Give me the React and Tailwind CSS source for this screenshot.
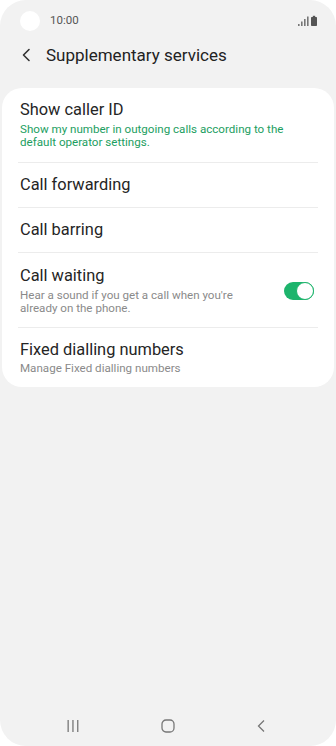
import React from "react";

function Row({ title, sub, subGreen, toggle, className = "", subClass = "mt-[2px]" }) {
  return (
    <div className={"flex items-center px-[18px] " + className}>
      <div className="flex-1">
        <div className="text-[16.4px] leading-[20px] text-[#252525]">{title}</div>
        {sub && (
          <div
            className={
              subClass +
              " text-[11.6px] leading-[13px] " +
              (subGreen ? "text-[#1c9e5f]" : "text-[#8a8a8a]")
            }
          >
            {sub}
          </div>
        )}
      </div>
      {toggle && (
        <div className="relative ml-3 mr-[2px] h-[18px] w-[30px] rounded-full bg-[#1db46c]">
          <div className="absolute right-0 top-0 h-[18px] w-[18px] rounded-full border-[1.5px] border-[#1db46c] bg-white" />
        </div>
      )}
    </div>
  );
}

function Divider() {
  return <div className="mx-4 h-px bg-[#ececec]" />;
}

export default function App() {
  return (
    <div className="h-[746px] w-[336px] bg-white" style={{ fontFamily: "Roboto, 'Noto Sans', sans-serif" }}>
      <div className="flex h-full w-full flex-col overflow-hidden rounded-[26px] bg-[#f2f2f2]">
        {/* status bar */}
        <div className="flex h-[40px] items-center pl-5 pr-[18px] pt-[1px]">
          <div className="h-[20px] w-[20px] rounded-full bg-white" />
          <div className="ml-[10px] mt-[1px] text-[11.5px] text-[#555]">10:00</div>
          <div className="flex-1" />
          <svg width="20" height="12" viewBox="0 0 20 12">
            <rect x="0" y="9" width="1.6" height="2" fill="#777" />
            <rect x="3" y="6.5" width="1.6" height="4.5" fill="#777" />
            <rect x="6" y="4" width="1.6" height="7" fill="#777" />
            <rect x="9" y="1.5" width="1.6" height="9.5" fill="#777" />
            <rect x="13" y="2" width="6" height="9" rx="0.8" fill="#555" />
            <rect x="14.8" y="0.8" width="2.4" height="1.5" fill="#555" />
          </svg>
        </div>
        {/* header */}
        <div className="flex h-[30px] items-center pl-[21px]">
          <svg width="10" height="14" viewBox="0 0 10 14" fill="none">
            <path d="M8 1.5 L2.5 7 L8 12.5" stroke="#333" strokeWidth="1.6" strokeLinecap="round" strokeLinejoin="round" />
          </svg>
          <div className="ml-[15px] text-[17px] leading-[24px] text-[#222]">Supplementary services</div>
        </div>
        {/* card */}
        <div className="mx-[2px] mt-[18px] rounded-[20px] bg-white">
          <Row
            className="pt-[12px] pb-[13px]"
            subClass="mt-[3px]"
            title="Show caller ID"
            sub={<>Show my number in outgoing calls according to the<br />default operator settings.</>}
            subGreen
          />
          <Divider />
          <Row className="h-[44px]" title="Call forwarding" />
          <Divider />
          <Row className="h-[44px]" title="Call barring" />
          <Divider />
          <Row
            className="pt-[13px] pb-[12px]"
            subClass="mt-[3px]"
            title="Call waiting"
            sub={<>Hear a sound if you get a call when you're<br />already on the phone.</>}
            toggle
          />
          <Divider />
          <Row
            className="pt-[12px] pb-[12px]"
            title="Fixed dialling numbers"
            sub="Manage Fixed dialling numbers"
          />
        </div>
        <div className="flex-1" />
        {/* nav bar */}
        <div className="flex h-[40px] items-center justify-between pl-[66px] pr-[67px]">
          <svg width="14" height="14" viewBox="0 0 14 14">
            <rect x="1.5" y="1" width="1.3" height="12" fill="#777" />
            <rect x="6.3" y="1" width="1.3" height="12" fill="#777" />
            <rect x="11.1" y="1" width="1.3" height="12" fill="#777" />
          </svg>
          <svg width="14" height="14" viewBox="0 0 14 14" fill="none">
            <rect x="1" y="1" width="12" height="12" rx="4" stroke="#777" strokeWidth="1.3" />
          </svg>
          <svg width="14" height="14" viewBox="0 0 14 14" fill="none">
            <path d="M9 1.5 L3.5 7 L9 12.5" stroke="#777" strokeWidth="1.3" />
          </svg>
        </div>
      </div>
    </div>
  );
}
